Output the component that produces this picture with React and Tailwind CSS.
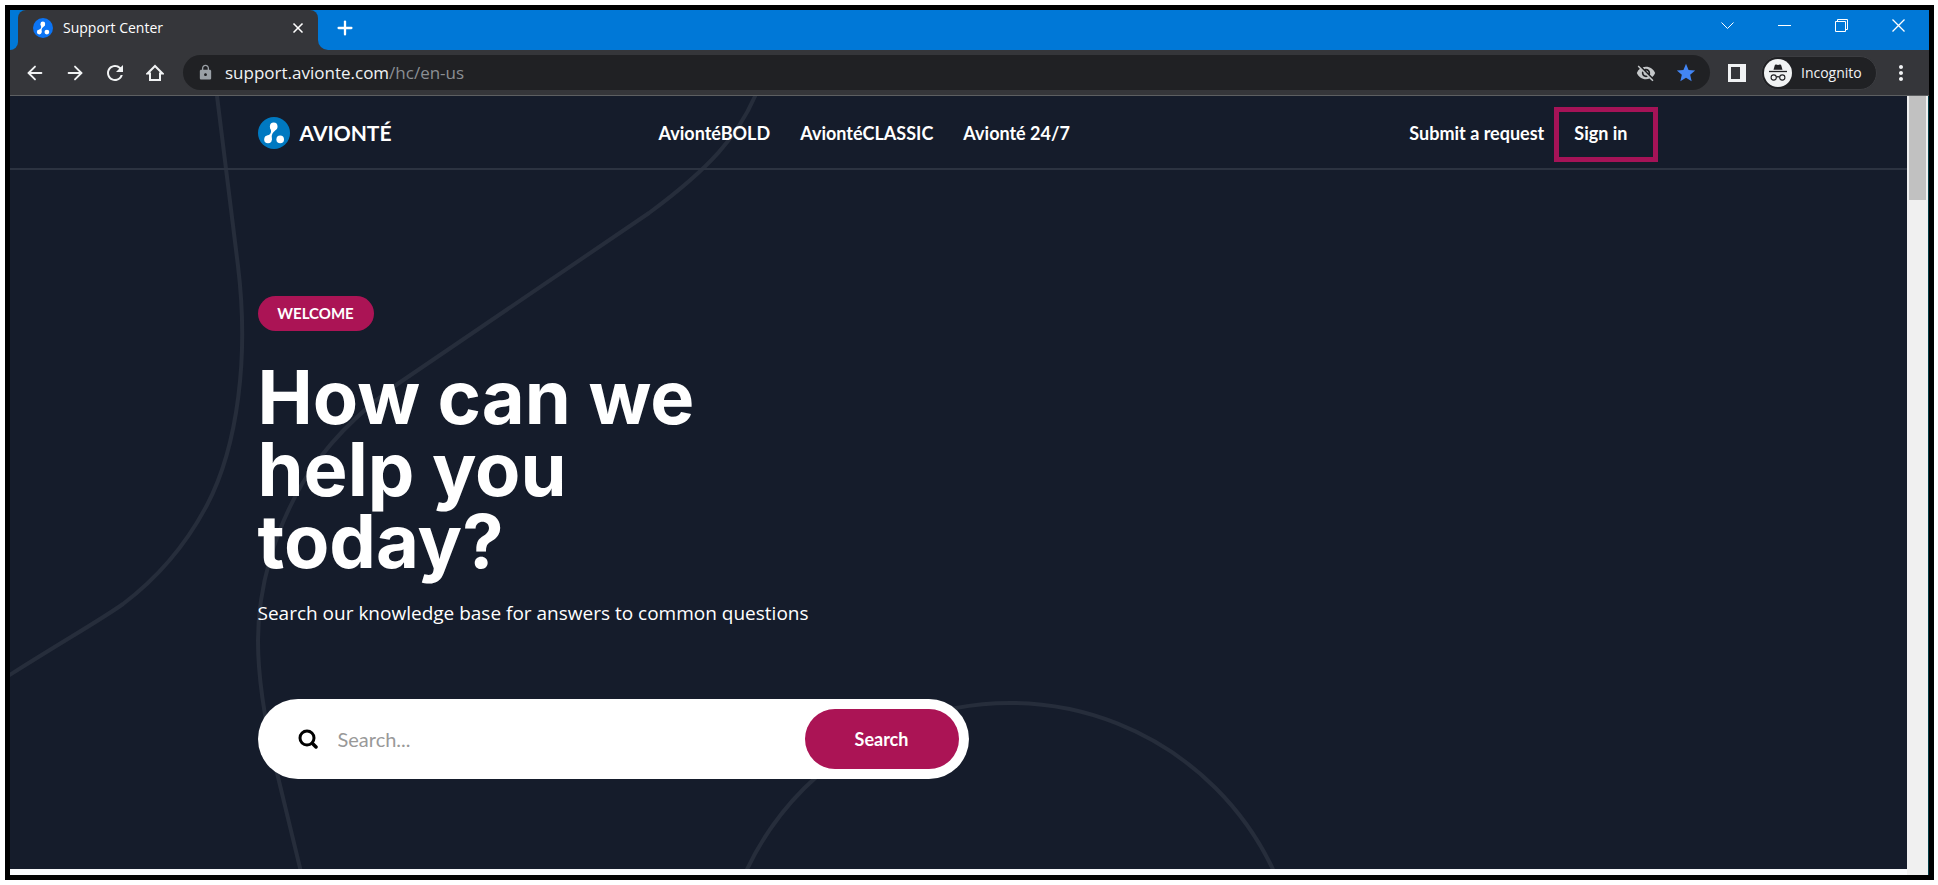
import { ArrowLeft, ArrowRight, Plus, X } from "lucide-react";
import { MdLock, MdRefresh, MdStar, MdVisibilityOff, MdMoreVert } from "react-icons/md";

const navLinks = ["AviontéBOLD", "AviontéCLASSIC", "Avionté 24/7"];

const Logo = ({ className, fill }) => (
  <svg viewBox="0 0 32 32" className={className} aria-hidden="true">
    <circle cx="16" cy="16" r="16" fill={fill} />
    <g fill="#fff">
      <circle cx="15.7" cy="9.4" r="3.8" />
      <circle cx="10" cy="22.4" r="3.8" />
      <circle cx="22.2" cy="22.4" r="3.8" />
      <path d="M12 10 C12.8 13 13.6 14 12.6 16.3 C11.6 18.3 9 18.5 7 20.2 L13.7 23.3 C14 21 13.2 19 14.5 16.5 C15.8 14.2 18.2 13.5 19.3 10.6 Z" />
    </g>
  </svg>
);

const WindowButton = ({ label, children }) => (
  <button aria-label={label} className="flex h-[31px] w-[57px] items-center justify-center">
    <svg width="13" height="13" viewBox="0 0 13 13" fill="none" stroke="#fff" aria-hidden="true">
      {children}
    </svg>
  </button>
);

const TabStrip = () => (
  <div className="flex h-10 bg-[#35363a] text-white">
    <div className="w-2 rounded-br-lg bg-[#0078d7]" />
    <div className="w-[300px] bg-[#0078d7]">
      <div className="flex h-full items-center rounded-t-lg bg-[#35363a] pb-1 pl-[15px] pr-3">
        <Logo className="size-5" fill="#0b74f5" />
        <span className="ml-[10px] flex-1 text-sm">Support Center</span>
        <button aria-label="Close tab"><X size={16} strokeWidth={2.5} /></button>
      </div>
    </div>
    <div className="flex flex-1 items-start justify-between rounded-bl-[10px] bg-[#0078d7]">
      <button aria-label="New tab" className="ml-4 mt-[7px]"><Plus size={22} strokeWidth={2.5} /></button>
      <div className="flex pr-0.5">
        <WindowButton label="Search tabs"><path d="M0.5 3.5 L6.5 9.5 L12.5 3.5" /></WindowButton>
        <WindowButton label="Minimize"><path d="M0 6.5 H13" /></WindowButton>
        <WindowButton label="Restore"><path d="M0.5 2.5 H10.5 V12.5 H0.5 Z M2.5 2.5 V0.5 H12.5 V10.5 H10.5" /></WindowButton>
        <WindowButton label="Close"><path d="M0.5 0.5 L12.5 12.5 M12.5 0.5 L0.5 12.5" strokeWidth="1.3" /></WindowButton>
      </div>
    </div>
  </div>
);

const Toolbar = () => (
  <div className="flex h-[46px] items-center border-b border-[#5d5f61] bg-[#35363a] pl-[5px] text-[#f1f3f4]">
    <button aria-label="Back" className="flex w-10 justify-center"><ArrowLeft size={22} /></button>
    <button aria-label="Forward" className="flex w-10 justify-center"><ArrowRight size={22} /></button>
    <button aria-label="Reload" className="flex w-10 justify-center"><MdRefresh size={24} /></button>
    <button aria-label="Home" className="flex w-10 justify-center">
      <svg width="18" height="18" viewBox="0 0 18 18" fill="none" stroke="currentColor" strokeWidth="2" aria-hidden="true">
        <path d="M1.5 9.5 L9 2 L16.5 9.5 H14 V16 H4 V9.5 Z" />
      </svg>
    </button>
    <div className="ml-2 flex h-[35px] flex-1 items-center rounded-full bg-[#202124] pl-3.5 pr-1">
      <MdLock size={17} className="text-[#9aa0a6]" />
      <div className="ml-[11px] flex-1 text-[17px]">
        support.avionte.com<span className="text-[#8b8f93]">/hc/en-us</span>
      </div>
      <button aria-label="Third-party cookies blocked" className="flex w-10 justify-center text-[#c4c7c9]"><MdVisibilityOff size={20} /></button>
      <button aria-label="Bookmark this page" className="flex w-10 justify-center text-[#4285f4]"><MdStar size={22} /></button>
    </div>
    <button aria-label="Side panel" className="ml-[18px] h-[18px] w-[18px] border-[3px] border-r-[6px] border-[#f1f3f4]" />
    <button className="ml-[15px] flex h-[34px] w-[116px] items-center rounded-full border border-[#3c3d41] bg-[#202124] pl-0.5 text-sm">
      <svg width="28" height="28" viewBox="0 0 28 28" aria-hidden="true">
        <circle cx="14" cy="14" r="14" fill="#f1f3f4" />
        <path d="M9.5 10.8 L10.8 6.3 Q11.2 5.3 12.2 5.6 L14 6.1 L15.8 5.6 Q16.8 5.3 17.2 6.3 L18.5 10.8 Z" fill="#202124" />
        <path d="M5 12.5 H23" stroke="#202124" strokeWidth="1.3" />
        <g fill="none" stroke="#202124" strokeWidth="1.1">
          <circle cx="9.7" cy="18.5" r="2.6" />
          <circle cx="18.3" cy="18.5" r="2.6" />
          <path d="M12.3 18.2 Q14 17 15.7 18.2" />
        </g>
      </svg>
      <span className="ml-[9px]">Incognito</span>
    </button>
    <button aria-label="Menu" className="flex w-[52px] justify-center pr-1"><MdMoreVert size={24} /></button>
  </div>
);

// Thin decorative lines behind the hero
const Curves = () => (
  <svg className="absolute inset-0 h-full w-full" fill="none" stroke="#262d3b" strokeWidth="4" aria-hidden="true">
    <path d="M207 0 L228 170 C239 260 228 350 197 409 C178 445 150 480 113 508 C92 523 60 541 -2 580" />
    <path d="M746 -2 C728 40 700 72 639 117 L389 287 C340 322 310 358 292 388 C265 435 248 490 248 545 C248 590 258 640 268 681 L291 776" />
    <circle cx="1000" cy="898" r="291" />
  </svg>
);

const Header = () => (
  <header className="relative border-b-2 border-[#2c3341]">
    <div className="mx-auto flex h-[72px] max-w-[1402px] items-center pt-0.5 text-lg font-bold">
      <a href="#" className="flex items-center gap-[10px] text-[21px]">
        <Logo className="size-8" fill="#0079c1" />
        <span>AVIONTÉ</span>
      </a>
      <nav className="ml-[267px] flex gap-[30px]">
        {navLinks.map((link) => (
          <a key={link} href="#">{link}</a>
        ))}
      </nav>
      <div className="ml-auto flex gap-[30px] pr-8">
        <a href="#">Submit a request</a>
        <a href="#" className="relative">
          Sign in
          <span className="absolute -left-5 -top-3 h-[55px] w-[104px] border-[5px] border-[#a51357]" />
        </a>
      </div>
    </div>
  </header>
);

const Hero = () => (
  <div className="relative mx-auto max-w-[1402px] pb-[90px] pt-[126px]">
    <span className="flex h-[35px] w-[116px] items-center justify-center rounded-full bg-[#ab1455] text-[15px] font-bold">WELCOME</span>
    <h1 className="mt-[30px] max-w-[500px] font-['Inter',sans-serif] text-[74px] font-bold leading-[72px]">How can we help you today?</h1>
    <p className="mt-[22px] font-['Open_Sans',sans-serif] text-[19px] leading-7">Search our knowledge base for answers to common questions</p>
    <form className="mt-[72px] flex h-20 max-w-[711px] items-center rounded-full bg-white pl-10 pr-[10px]" onSubmit={(e) => e.preventDefault()}>
      <svg width="20" height="20" viewBox="0 0 20 20" fill="none" stroke="#000" strokeWidth="3" strokeLinecap="round" aria-hidden="true">
        <circle cx="9" cy="9" r="7" />
        <path d="M14.5 14.5 L18 18" strokeWidth="3.5" />
      </svg>
      <input type="search" aria-label="Search" placeholder="Search..." className="ml-5 min-w-0 flex-1 text-xl text-black outline-none placeholder:text-[#999]" />
      <button className="h-[60px] w-[154px] rounded-full bg-[#ab1455] text-lg font-bold">Search</button>
    </form>
  </div>
);

const App = () => {
  return (
    <div className="bg-white p-[5px] pr-1">
      <div className="border-[5px] border-black font-['Open_Sans',sans-serif]">
        <TabStrip />
        <Toolbar />
        <div className="flex border-r border-[#003c46]">
          <div className="flex-1 bg-[#f8f9fb] pb-1.5">
            <div className="relative overflow-hidden bg-[#151c2b] font-['Lato',sans-serif] text-white">
              <Curves />
              <Header />
              <Hero />
            </div>
          </div>
          <div className="w-[21px] bg-[#f0f0f0] px-0.5">
            <div className="h-[104px] bg-[#c1c1c1]" />
          </div>
        </div>
      </div>
    </div>
  );
};

export default App;
